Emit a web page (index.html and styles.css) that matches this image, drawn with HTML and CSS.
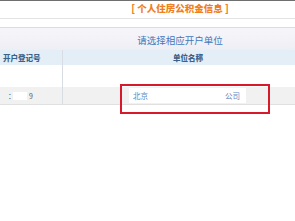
FILE: index.html
```html
<!DOCTYPE html>
<html lang="zh">
<head>
<meta charset="utf-8">
<link rel="stylesheet" href="styles.css">
</head>
<body>
<div class="page">
  <div class="topline"></div>
  <div class="title-row"><div class="shift"><span class="title">[ 个人住房公积金信息 ]</span></div></div>
  <div class="gap"></div>
  <div class="subtitle-row"><div class="shift"><span class="subtitle">请选择相应开户单位</span></div></div>
  <div class="table">
    <div class="row head">
      <div class="c1">开户登记号</div>
      <div class="c2">单位名称</div>
    </div>
    <div class="row blank">
      <div class="c1"></div>
      <div class="c2"></div>
    </div>
    <div class="row data">
      <div class="c1"><span class="colon">：</span><span class="mask small"></span><span class="num">9</span></div>
      <div class="c2"><span class="unit"><span>北京</span><span class="mask wide"></span><span>公司</span></span></div>
    </div>
  </div>
  <div class="highlight"></div>
</div>
</body>
</html>
```
FILE: styles.css
```css
html, body {
  margin: 0;
  padding: 0;
  background: #fff;
}
.page {
  position: relative;
  width: 295px;
  height: 221px;
  overflow: hidden;
  font-family: "Noto Sans CJK SC", "Noto Sans", sans-serif;
}
.topline {
  height: 1px;
  background: #6f6f6f;
}
.title-row {
  height: 17px;
  border-bottom: 1px solid #e4e4e4;
  background: #fff;
}
.shift {
  margin-left: 65px;
  text-align: center;
  height: 100%;
  display: flex;
  align-items: center;
  justify-content: center;
}
.title {
  color: #f07f22;
  font-weight: 900;
  font-size: 9.5px;
  line-height: 1;
  margin-top: -2px;
}
.gap {
  height: 8px;
  border-bottom: 1px solid #dcdcdc;
}
.subtitle-row {
  height: 22px;
  background: linear-gradient(#f6f6fa, #eeeef5);
}
.subtitle {
  color: #3f79bd;
  font-size: 9.5px;
  line-height: 1;
  margin-top: 3px;
}
.table {
  width: 313px;
}
.row {
  display: flex;
}
.c1 {
  width: 62px;
  border-right: 1px solid #d8dde3;
  display: flex;
  align-items: center;
}
.c2 {
  flex: 1;
  display: flex;
  align-items: center;
  justify-content: center;
}
.head {
  height: 15px;
  background: #e4eef7;
  color: #3d6288;
  font-weight: 900;
  font-size: 7.5px;
}
.head .c1 {
  padding-left: 3px;
  width: 59px;
}
.blank {
  height: 22px;
  background: #fff;
}
.data {
  height: 17px;
  background: #f1f1f1;
  border-bottom: 1px solid #e0e0e0;
  font-size: 7.5px;
  color: #5b86bd;
}
.data .c1 {
  padding-left: 8px;
  width: 54px;
  color: #555;
}
.colon {
  width: 5px;
}
.mask {
  background: #fff;
  display: inline-block;
}
.small {
  width: 14px;
  height: 8px;
  margin-right: 2px;
}
.num {
  font-size: 7px;
}
.data .c2 {
  justify-content: flex-start;
  padding-left: 66px;
}
.unit {
  display: flex;
  align-items: center;
  background: #fff;
  height: 15px;
  padding: 0 6px 0 4px;
}
.wide {
  width: 77px;
  height: 15px;
}
.highlight {
  position: absolute;
  left: 120px;
  top: 84px;
  width: 146px;
  height: 26px;
  border: 2.5px solid #d61a2c;
}
```
